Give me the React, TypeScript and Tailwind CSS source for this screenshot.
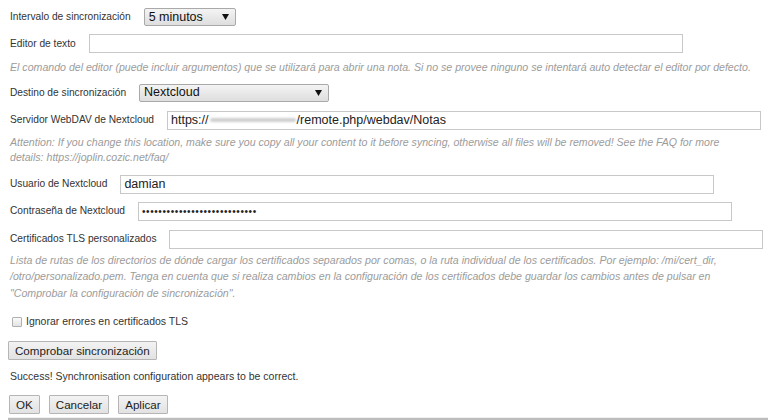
import React from "react";

const font = "font-['Liberation_Sans',Arial,sans-serif]";

function Label({ children }: { children: React.ReactNode }) {
  return <span className="mr-[13px] text-[10.2px] text-[#333]">{children}</span>;
}

function Select({ value, width }: { value: string; width: string }) {
  return (
    <div
      className={`flex h-[18px] items-center justify-between rounded-[2px] border border-[#a9a9a9] bg-gradient-to-b from-[#f4f4f4] to-[#dedede] pl-[4px] pr-[6px] text-[12.5px] text-[#111] ${width}`}
    >
      <span>{value}</span>
      <svg width="7" height="6" viewBox="0 0 7 6">
        <path d="M0 0h7L3.5 6z" fill="#111" />
      </svg>
    </div>
  );
}

function TextInput({
  children,
  className = "",
}: {
  children?: React.ReactNode;
  className?: string;
}) {
  return (
    <div
      className={`flex h-[19px] w-[594px] items-center border border-[#c8c8c8] bg-white px-[3px] text-[12.5px] text-[#222] ${className}`}
    >
      {children}
    </div>
  );
}

function Button({ children }: { children: React.ReactNode }) {
  return (
    <button className="h-[19px] rounded-[1px] border border-[#b5b5b5] bg-gradient-to-b from-[#f3f3f3] to-[#e2e2e2] px-[6px] text-[11.6px] leading-none text-[#222]">
      {children}
    </button>
  );
}

function Description({
  children,
  leading = "leading-[16.5px]",
  pad = "pr-[10px]",
}: {
  children: React.ReactNode;
  leading?: string;
  pad?: string;
}) {
  return <p className={`text-[10.6px] italic text-[#9c9c9c] ${leading} ${pad}`}>{children}</p>;
}

export default function App() {
  return (
    <div className={`${font} relative h-[420px] w-[768px] overflow-hidden bg-white pl-[10px] pt-[8px]`}>
      <div className="flex h-[18px] items-center">
        <Label>Intervalo de sincronización</Label>
        <Select value="5 minutos" width="w-[92px]" />
      </div>

      <div className="mt-[8px] flex items-center">
        <Label>Editor de texto</Label>
        <TextInput />
      </div>
      <div className="mt-[6px]">
        <Description>
          El comando del editor (puede incluir argumentos) que se utilizará para abrir una nota. Si no se
          provee ninguno se intentará auto detectar el editor por defecto.
        </Description>
      </div>

      <div className="mt-[8px] flex items-center">
        <Label>Destino de sincronización</Label>
        <Select value="Nextcloud" width="w-[190px]" />
      </div>

      <div className="mt-[9px] flex items-center">
        <Label>Servidor WebDAV de Nextcloud</Label>
        <TextInput>
          <span>https://</span>
          <span className="mx-[1px] inline-block h-[4px] w-[86px] rounded-full bg-[#cfcfcf] blur-[1px]" />
          <span>/remote.php/webdav/Notas</span>
        </TextInput>
      </div>
      <div className="mt-[5px]">
        <Description leading="leading-[15.5px]" pad="pr-[36px]">
          Attention: If you change this location, make sure you copy all your content to it before syncing,
          otherwise all files will be removed! See the FAQ for more details: https://joplin.cozic.net/faq/
        </Description>
      </div>

      <div className="mt-[9px] flex items-center">
        <Label>Usuario de Nextcloud</Label>
        <TextInput className="h-[18px]">damian</TextInput>
      </div>

      <div className="mt-[8px] flex items-center">
        <Label>Contraseña de Nextcloud</Label>
        <TextInput>
          <span className="text-[10px] tracking-[0.6px]">••••••••••••••••••••••••••••</span>
        </TextInput>
      </div>

      <div className="mt-[9px] flex items-center">
        <Label>Certificados TLS personalizados</Label>
        <TextInput />
      </div>
      <div className="mt-[3px]">
        <Description>
          Lista de rutas de los directorios de dónde cargar los certificados separados por comas, o la ruta
          individual de los certificados. Por ejemplo: /mi/cert_dir, /otro/personalizado.pem. Tenga en cuenta
          que si realiza cambios en la configuración de los certificados debe guardar los cambios antes de
          pulsar en "Comprobar la configuración de sincronización".
        </Description>
      </div>

      <div className="mt-[14px] flex h-[14px] items-center">
        <span className="ml-[2px] mr-[4px] h-[10px] w-[10px] rounded-[1px] border border-[#b0b0b0] bg-gradient-to-b from-[#fafafa] to-[#e4e4e4]" />
        <span className="text-[10.5px] text-[#333]">Ignorar errores en certificados TLS</span>
      </div>

      <div className="-ml-[2px] mt-[12px] flex">
        <Button>Comprobar sincronización</Button>
      </div>

      <p className="mt-[9px] h-[14px] text-[10.5px] leading-[14px] text-[#333]">
        Success! Synchronisation configuration appears to be correct.
      </p>

      <div className="-ml-[1px] mt-[12px] flex gap-[9px]">
        <Button>OK</Button>
        <Button>Cancelar</Button>
        <Button>Aplicar</Button>
      </div>

      <div className="absolute bottom-0 left-[8px] right-0 h-[3px] border-b-2 border-t border-b-[#bdbdbd] border-t-[#f0f0f0]" />
    </div>
  );
}
